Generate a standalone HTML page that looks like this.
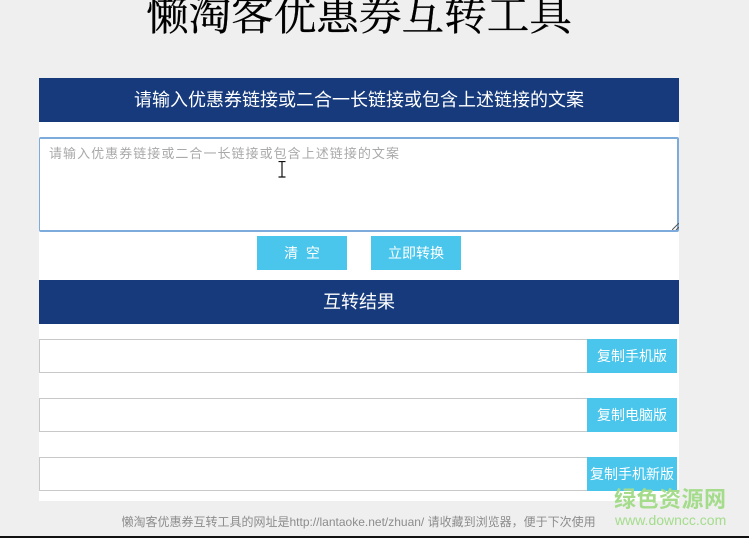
<!DOCTYPE html>
<html lang="zh">
<head>
<meta charset="utf-8">
<style>
html,body{margin:0;padding:0;width:749px;height:538px;overflow:hidden;background:#efefef;}
body{position:relative;font-family:"Liberation Sans","Noto Sans CJK SC",sans-serif;}
.a{position:absolute;white-space:nowrap;}
.title{left:146px;width:430px;top:-13px;font-size:42.6px;line-height:60px;color:#000;font-family:"Liberation Serif","Noto Serif CJK SC",serif;-webkit-text-stroke:.3px #000;}
.panel{left:39px;top:78px;width:640px;height:423px;background:#fff;}
.bar{left:39px;width:640px;height:44px;line-height:44px;background:#163a7c;color:#fff;text-align:center;font-size:18px;}
.ta{left:39px;top:137px;width:637px;height:91px;border:2px solid #7cabdc;border-width:2px 2px 2px 1.5px;border-radius:2px;background:#fff;box-sizing:content-box;}
.ph{left:49px;top:146px;font-size:13px;line-height:16px;color:#a9a9a9;letter-spacing:1.04px;}
.btn{background:#4ac6ec;color:#fff;text-align:center;height:34px;line-height:34px;font-size:14px;}
.inp{left:39px;width:547px;height:32px;border:1px solid #c8c8c8;background:#fff;}
.foot{left:121.5px;top:514px;font-size:12px;line-height:16px;color:#8c8c8c;}
.wm1{left:614px;top:487px;font-size:22px;line-height:26px;font-weight:bold;color:#a4dc8c;letter-spacing:0.5px;}
.wm2{left:615px;top:512px;font-size:14px;line-height:16px;color:#a4dc8c;}
.blk{left:0;top:536px;width:749px;height:2px;background:#111;}
</style>
</head>
<body>
<div class="a title">懒淘客优惠券互转工具</div>
<div class="a panel"></div>
<div class="a bar" style="top:78px;">请输入优惠券链接或二合一长链接或包含上述链接的文案</div>
<div class="a ta"></div>
<div class="a ph">请输入优惠券链接或二合一长链接或包含上述链接的文案</div>
<svg class="a" style="left:672px;top:223px" width="7" height="7" viewBox="0 0 7 7"><path d="M0 7L7 0M4 7L7 4" stroke="#555" stroke-width="1" fill="none"/></svg>
<svg class="a" style="left:277px;top:161px" width="10" height="17" viewBox="0 0 10 17"><path d="M1.5 .5H8.5M5 .5V16M1.5 16H8.5" stroke="#111" stroke-width="1.2" fill="none"/></svg>
<div class="a btn" style="left:257px;top:236px;width:90px;">清&nbsp;&nbsp;空</div>
<div class="a btn" style="left:371px;top:236px;width:90px;">立即转换</div>
<div class="a bar" style="top:280px;">互转结果</div>
<div class="a inp" style="top:339px;"></div>
<div class="a btn" style="left:587px;top:339px;width:90px;">复制手机版</div>
<div class="a inp" style="top:398px;"></div>
<div class="a btn" style="left:587px;top:398px;width:90px;">复制电脑版</div>
<div class="a inp" style="top:457px;"></div>
<div class="a btn" style="left:587px;top:457px;width:90px;">复制手机新版</div>
<div class="a foot">懒淘客优惠券互转工具的网址是http://lantaoke.net/zhuan/ 请收藏到浏览器，便于下次使用</div>
<div class="a wm1">绿色资源网</div>
<div class="a wm2">www.downcc.com</div>
<div class="a blk"></div>
</body>
</html>
